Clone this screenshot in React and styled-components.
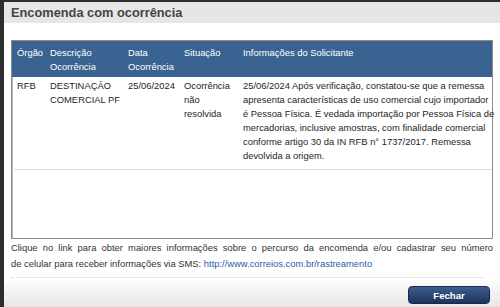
import styled, { createGlobalStyle } from "styled-components"

const GlobalStyle = createGlobalStyle`
    html, body {
        margin: 0;
        padding: 0;
        background: #2d2d2d;
        font-family: "Liberation Sans", Arial, sans-serif;
    }
`

const Backdrop = styled.div`
    width: 500px;
    height: 307px;
    padding: 2px 0 0 4px;
    box-sizing: border-box;
    overflow: hidden;
`

const Modal = styled.div`
    height: 305px;
    background: #fff;
    display: flex;
    flex-direction: column;
`

const Header = styled.div`
    height: 21px;
    background: #e6e6e6;
    display: flex;
    align-items: center;
    padding: 0 7px;
`

const Title = styled.h1`
    margin: 0;
    font-size: 12.8px;
    font-weight: 700;
    color: #444;
`

const Body = styled.div`
    padding: 17px 7px 0 7px;
    display: flex;
    flex-direction: column;
`

const TableBox = styled.div`
    height: 199px;
    box-sizing: border-box;
    border: 1px solid #8c8c8c;
    box-shadow: inset 1px 1px 0 #b5b5b5;
`

const Table = styled.table`
    width: 100%;
    table-layout: fixed;
    border-collapse: collapse;
    font-size: 9.4px;
    line-height: 14px;
`

const Th = styled.th`
    box-sizing: border-box;
    background: #3a6391;
    color: #fff;
    font-weight: 400;
    text-align: left;
    vertical-align: top;
    padding: 5px 2px 3px 5px;
    width: ${(p) => p.$w || "auto"};
`

const Td = styled.td`
    box-sizing: border-box;
    color: #1e1e1e;
    vertical-align: top;
    padding: 2px 1px 6px 5px;
    border-bottom: 1px solid #dedede;
    white-space: nowrap;
`

const Note = styled.div`
    margin-top: 1px;
    font-size: 9.4px;
    line-height: 15.5px;
    color: #333;
`

const NoteLine = styled.div`
    text-align: ${(p) => (p.$full ? "justify" : "left")};
    text-align-last: ${(p) => (p.$full ? "justify" : "left")};
`

const Link = styled.a`
    color: #2a5ba8;
    text-decoration: none;
`

const Divider = styled.div`
    margin: 6px 8px 0 0;
    border-top: 1px dotted #d4d4d4;
`

const Footer = styled.div`
    flex: 1;
    display: flex;
    justify-content: flex-end;
    align-items: flex-start;
    padding: 8px 10px 0 0;
    background: linear-gradient(#ffffff, #e6e6e6);
`

const Button = styled.button`
    width: 82px;
    height: 18px;
    border: 1px solid #17294a;
    border-radius: 4px;
    background: linear-gradient(#3d5d8c, #1c345c);
    color: #fff;
    font-family: "Liberation Sans", Arial, sans-serif;
    font-size: 9.6px;
    font-weight: 700;
    cursor: pointer;
    padding: 0;
`

const info = [
    "25/06/2024 Após verificação, constatou-se que a remessa",
    "apresenta características de uso comercial cujo importador",
    "é Pessoa Física. É vedada importação por Pessoa Física de",
    "mercadorias, inclusive amostras, com finalidade comercial",
    "conforme artigo 30 da IN RFB n° 1737/2017. Remessa",
    "devolvida a origem.",
]

export default function App() {
    return (
        <Backdrop>
            <GlobalStyle />
            <Modal>
                <Header>
                    <Title>Encomenda com ocorrência</Title>
                </Header>
                <Body>
                    <TableBox>
                        <Table>
                            <thead>
                                <tr>
                                    <Th $w="33px">Órgão</Th>
                                    <Th $w="78px">Descrição Ocorrência</Th>
                                    <Th $w="56px">Data Ocorrência</Th>
                                    <Th $w="59px">Situação</Th>
                                    <Th>Informações do Solicitante</Th>
                                </tr>
                            </thead>
                            <tbody>
                                <tr>
                                    <Td>RFB</Td>
                                    <Td>DESTINAÇÃO<br />COMERCIAL PF</Td>
                                    <Td>25/06/2024</Td>
                                    <Td>Ocorrência<br />não<br />resolvida</Td>
                                    <Td>
                                        {info.map((line, i) => (
                                            <div key={i}>{line}</div>
                                        ))}
                                    </Td>
                                </tr>
                            </tbody>
                        </Table>
                    </TableBox>
                    <Note>
                        <NoteLine $full>
                            Clique no link para obter maiores informações sobre o percurso da encomenda e/ou cadastrar seu número
                        </NoteLine>
                        <NoteLine>
                            de celular para receber informações via SMS:{" "}
                            <Link href="#">http://www.correios.com.br/rastreamento</Link>
                        </NoteLine>
                    </Note>
                    <Divider />
                </Body>
                <Footer>
                    <Button>Fechar</Button>
                </Footer>
            </Modal>
        </Backdrop>
    )
}
